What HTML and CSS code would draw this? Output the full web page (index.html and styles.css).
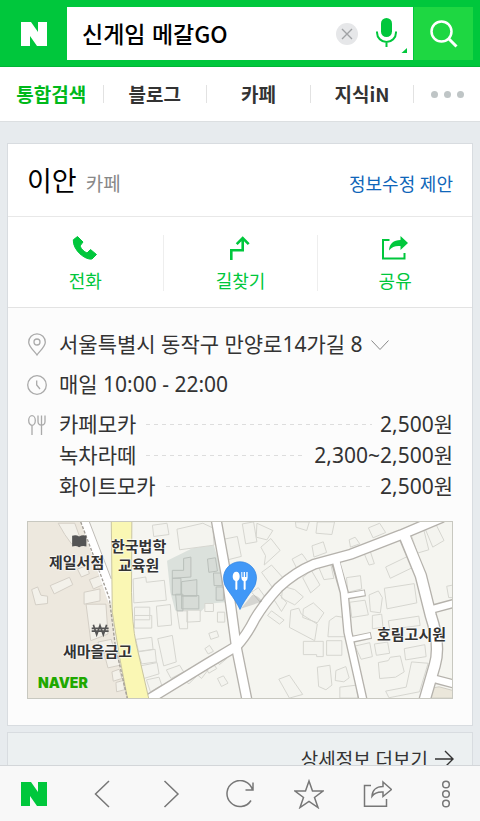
FILE: index.html
```html
<!DOCTYPE html>
<html lang="ko">

<head>
    <meta charset="UTF-8">
    <meta name="viewport" content="width=device-width, initial-scale=1.0">
    <title>NAVER</title>
    <link rel="stylesheet" href="styles.css">
</head>

<body>
    <header class="header">
        <a href="#" class="logo" aria-label="NAVER">
            <svg width="26" height="24" viewBox="0 0 26 24"><path fill="#fff" d="M0 0h10l7 10V0h9v24H16L9 14v10H0z"/></svg>
        </a>
        <form class="search">
            <input type="text" class="query" value="신게임 메갈GO" aria-label="검색어">
            <button type="button" class="clear" aria-label="지우기">
                <svg width="22" height="22" viewBox="0 0 22 22"><circle cx="11" cy="11" r="11" fill="#e6e7e9"/><path d="M6 6l10 10M16 6L6 16" stroke="#a0a2a5" stroke-width="1.4"/></svg>
            </button>
            <button type="button" class="mic" aria-label="음성검색">
                <svg width="32" height="40" viewBox="0 0 32 40"><rect x="6" y="4" width="11" height="19" rx="5.5" fill="#00c73c"/><path d="M2 17.500v1a9.500 9.500 0 0 0 19 0v-1M11.500 28v5" fill="none" stroke="#00c73c" stroke-width="2"/><path d="M32 34v5H26.500z" fill="#00c73c"/></svg>
            </button>
        </form>
        <button type="submit" class="search-button" aria-label="검색">
            <svg width="28" height="28" viewBox="0 0 28 28" fill="none" stroke="#fff"><circle cx="11.500" cy="11.500" r="10" stroke-width="2.500"/><path d="M18.500 18.500l8 8" stroke-width="3"/></svg>
        </button>
    </header>

    <nav class="tabs">
        <a href="#" class="tab active">통합검색</a>
        <a href="#" class="tab">블로그</a>
        <a href="#" class="tab">카페</a>
        <a href="#" class="tab">지식iN</a>
        <button type="button" class="tab-more" aria-label="더보기"><i></i><i></i><i></i></button>
    </nav>

    <main class="content">
        <section class="card">
            <div class="card-title">
                <h1>이안</h1>
                <span class="category">카페</span>
                <a href="#" class="suggest">정보수정 제안</a>
            </div>
            <div class="actions">
                <a href="#" class="action">
                    <svg width="26" height="26" viewBox="0 0 26 26"><path fill="#00c73c" stroke="#00c73c" stroke-linejoin="round" d="M5.500 1.500l5.500 5.500-3 4c1.500 3.500 4 5.500 7 7l3.500-3.500 6 5-4.500 4.500C13.500 25.500.5 15 1.300 4.800z"/></svg>
                    <span>전화</span>
                </a>
                <a href="#" class="action">
                    <svg width="26" height="26" viewBox="0 0 26 26" fill="none" stroke="#00c73c" stroke-width="2.600"><path d="M4.300 25V15.300h11.400V3.500M9.700 9.200l6-6.200 6 6.200"/></svg>
                    <span>길찾기</span>
                </a>
                <a href="#" class="action">
                    <svg width="26" height="26" viewBox="0 0 26 26"><path fill="none" stroke="#00c73c" stroke-width="2" d="M7.500 5H1v18.500h21.500V18"/><path fill="#00c73c" d="M18.500 1L26 8l-7.500 7v-4c-5-.5-8.500.8-11.500 4.500C7.300 9 11.500 5 18.500 5z"/></svg>
                    <span>공유</span>
                </a>
            </div>
            <div class="details">
                <div class="row">
                    <svg class="row-icon" width="20" height="24" viewBox="0 0 20 24" fill="none" stroke="#aaa" stroke-width="1.300"><path d="M10 22C8 18.500 1.700 14 1.700 9.200a8.300 8.300 0 0 1 16.600 0C18.300 14 12 18.500 10 22z"/><circle cx="10" cy="9" r="3"/></svg>
                    <a href="#" class="address">서울특별시 동작구 만양로14가길 8
                        <svg width="18" height="12" viewBox="0 0 18 12" fill="none" stroke="#888"><path d="M.5 1.500l8.500 9 8.500-9"/></svg>
                    </a>
                </div>
                <div class="row">
                    <svg class="row-icon" width="20" height="24" viewBox="0 0 20 24" fill="none" stroke="#aaa" stroke-width="1.300"><circle cx="10" cy="12" r="9.300"/><path d="M9.700 7.500V12l3.300 4"/></svg>
                    <span>매일 10:00 - 22:00</span>
                </div>
                <div class="row">
                    <svg class="row-icon" width="20" height="24" viewBox="0 0 20 24" fill="none" stroke="#aaa" stroke-width="1.300"><ellipse cx="5" cy="7.500" rx="3.300" ry="4.800"/><path d="M5 12.500V22M11 2.500v6q0 3.500 3.500 3.500T18 8.500v-6M14.500 2.500V22"/></svg>
                    <ul class="menu">
                        <li><span>카페모카</span><i></i><span>2,500원</span></li>
                        <li><span>녹차라떼</span><i></i><span>2,300~2,500원</span></li>
                        <li><span>화이트모카</span><i></i><span>2,500원</span></li>
                    </ul>
                </div>
                <div class="map">
                    <svg class="map-base" viewBox="21 18 1278 531" preserveAspectRatio="xMidYMid slice">
                        <rect x="-400" y="18" width="2200" height="531" fill="#f5f5f0"/>
                        <path fill="#ede8de" d="M-400 18H182L268 250 288 400 322 549H-400z"/>
                        <!-- school grounds -->
                        <path fill="#dbe1dc" d="M440 135L515 98 580 85 600 150 615 260 565 265 540 290 465 285 450 230z"/>
                        <!-- buildings -->
                        <g fill="#f3f1ea" stroke="#d4cfc6" stroke-width="3">
                            <path d="M88 210l58-25 10 22-56 28zM32 222l18-8 10 25 20 3v22l-36 4zM112 22h50l18 50-28 12-20-28zM190 230l48-10v36l-48 10zM196 266h60l6 90-52 20zM170 160l28-10 8 24-24 10zM232 380l40-8 8 32-38 12zM252 420l36-6 10 36-36 8zM274 470l22-8 8 28-26 8zM286 502l22-6 4 28-24 6zM206 192l32-12 12 26-32 14z"/>
                        </g>
                        <g fill="#f4f4ef" stroke="#d6d6d0" stroke-width="3">
                            <path d="M338 190l38-6 2 16 54-6 6 60-98 8zM342 275h46v38h-46zM342 300h52v38h-52zM408 272l42-5 4 62-42 4zM346 372l48-6 4 36-44 6zM352 410l52-8 4 38-44 6zM412 370l44-10 12 80-38 12zM360 452l50-10 6 34-46 14zM378 494l38-8 8 24-34 20zM396 28l44-6 6 34-46 6zM470 40l78-18 30 14 4 52-104 14zM470 286h32v54h-24zM500 284h40v34l-40 2zM554 264h26v24h-26zM566 354l24-8 6 18-24 8zM592 490l18-8 14 22-20 10zM592 290h22v30h-22zM438 464l40-14 12 20-38 20zM484 490l22-22 20 18-20 20zM516 464l24-16 24 16-20 26zM550 448l22-12 18 24-24 14zM578 420l20-14 22 24-22 18zM554 400l14-10 12 18-16 8zM612 70l40-8 12 60-40 10z"/>
                        </g>
                        <g fill="#d7dcd7" stroke="#b9c0ba" stroke-width="3">
                            <path d="M456 164h34v-36l22-4v60l-56 4zM456 188h26v50h-26zM484 198l46-6v50h-46zM484 240h52v40h-52zM466 236h22v50h-18zM562 130l24-4 6 40-26 4zM580 172h26v38h-24zM588 214h22v40h-22z"/>
                        </g>
                        <g fill="#f4f4ef" stroke="#d6d6d0" stroke-width="3" transform="translate(645 0)">
                            <path d="M22 24l34-6 10 60-34 6zM66 22l48 22-18 28-32-8zM78 94l30-26 28 36-48 44 4-28zM182 18h42l-8 26-32-10zM248 18h52l-8 38-48-4zM232 90l34-12 10 32-38 14zM172 130l30-16 20 28-30 28zM80 170l30-22 36 40-30 32zM246 140l40-6 12 54-30 4zM204 186l26-22 26 44-28 24zM144 212l36 10 26 22-26 24-40-20zM116 250l16-16 24 28-16 26zM98 300l12-14 38 28-14 12zM50 230l20-14 32 44-14 14zM168 284l24-6 8 18 48 30-8 50-76-40zM206 280l30-18 32 30-20 30-44-16zM284 316l20-14 26 4v58h-50zM206 378h60v46h-20v-6h-40zM276 376h46v44h-46zM344 72l18-8 14 20-28 10zM402 36l34-14 18 28-38 16zM386 106l20-4 14 42-16 4zM336 186l42-6 4 40-42 10zM454 154l66-32 14 34-66 32zM530 54l38-16 16 64-34 10zM572 36l32-14 26 52-34 20zM450 218l90-14 8 58-90 18zM346 260l46-6 10 44-50 8zM404 238l28-12 12 20-6 46-30-4zM414 300l28-4 4 40-32 4zM462 316l92-14 4 28-92 12zM362 392l44-10 8 42-34 8zM420 386l40-6 6 34-40 6zM510 400l62-12 4 36-62 10zM432 442l30-6 6-10 30-4 12 48-26 16-48 4zM454 528l62-12 16-76 50 4-26 86-92 18zM248 456l38-6 6 60-18 14-22-10zM304 466l30-12 10 34-16 12-26-4zM316 516l50-6 4 39h-54zM132 492l32-12 40 58-40 11zM638 212l20-4v38h-14z"/>
                        </g>
                        <path fill="#ebe7db" stroke="#d0cdc3" stroke-width="3" d="M1230 520l30-5 45 12v22h-76z"/>
                        <!-- road outlines -->
                        <g fill="none" stroke="#b5b2ac" stroke-width="34">
                            <path d="M588 10L624 210 649 395 682 560"/>
                            <path d="M380 556L560 446 650 392Q680 360 705 310Q735 260 775 217Q825 170 885 145L995 115 1145 57 1270 4"/>
                            <path stroke-width="28" d="M947 135L974 230 985 350 1032 560"/>
                            <path stroke-width="21" d="M978 242l60-10M990 374l66-14"/>
                            <path stroke-width="38" d="M1153 55L1205 180 1235 300Q1265 390 1247 450L1215 560"/>
                            <path stroke-width="28" d="M1235 282l75-20M1240 490l70 18"/>
                        </g>
                        <!-- roads -->
                        <g fill="none" stroke="#fff" stroke-width="26">
                            <path d="M588 10L624 210 649 395 682 560"/>
                            <path d="M380 556L560 446 650 392Q680 360 705 310Q735 260 775 217Q825 170 885 145L995 115 1145 57 1270 4"/>
                            <path stroke-width="20" d="M947 125L974 230 985 350 1032 560"/>
                            <path stroke-width="14" d="M975 242l60-10M987 374l66-14"/>
                            <path stroke-width="30" d="M1153 52L1205 180 1235 300Q1265 390 1247 450L1215 560"/>
                            <path stroke-width="20" d="M1230 284l80-22M1235 488l75 20"/>
                        </g>
                        <path fill="#fff" d="M180 18h26L274 190v70l-10 2z"/>
                        <path fill="#faf7b4" stroke="#c9c5a0" stroke-width="3" d="M272 12H334L333 230Q335 330 347 385L386 555H322L296 420 275 290z"/>
                        <path fill="none" stroke="#a29d96" stroke-width="4" stroke-dasharray="9 5" d="M180 18L228 145 266 248 284 390 320 549"/>
                        <path fill="none" stroke="#bdbab4" stroke-width="3" d="M206 18L272 190"/>
                        <!-- place symbols -->
                        <path fill="#555" d="M154 60q12-4 21 2 10-6 22-2v32q-12-4-22 2-9-6-21-2z"/>
                        <path fill="none" stroke="#555" stroke-width="5" d="M218 328l10 30 10-28 10 28 10-30M213 339h51M213 347h51"/>
                        <!-- pin -->
                        <path fill="#555" opacity=".2" d="M662 280l65-22q-10-18-30-20z"/>
                        <path fill="#4198f7" stroke="#2f83df" stroke-width="2" d="M660 282Q650 260 625 226Q610 208 610 188a50 50 0 0 1 100 0Q710 208 695 226Q670 260 660 282z"/>
                        <path fill="#fff" d="M649 168c13 0 13 25 3 28v24q-3 6-6 0v-24c-11-3-11-28 3-28zM664 169h3v15h4v-15h4v15h4v-15h4v17q0 8-6 11v23q-3 6-6 0v-23q-7-3-7-11z"/>
                    </svg>
                    <span class="label label-book">제일서점</span>
                    <span class="label label-school">한국법학<br>교육원</span>
                    <span class="label label-bank">새마을금고</span>
                    <span class="label label-house">호림고시원</span>
                    <span class="map-logo">NAVER</span>
                </div>
            </div>
        </section>
        <a href="#" class="more">
            <span>상세정보 더보기</span>
            <svg width="19" height="18" viewBox="0 0 19 18" fill="none" stroke="#333" stroke-width="1.400"><path d="M0 9h18M10 1l8 8-8 8"/></svg>
        </a>
    </main>

    <footer class="toolbar">
        <button type="button" aria-label="홈"><svg width="26" height="24" viewBox="0 0 26 24"><path fill="#00c73c" d="M0 0h10l7 10V0h9v24H16L9 14v10H0z"/></svg></button>
        <button type="button" aria-label="뒤로"><svg width="28" height="28" viewBox="0 0 28 28"><path d="M20 1L6.500 14 20 27"/></svg></button>
        <button type="button" aria-label="앞으로"><svg width="28" height="28" viewBox="0 0 28 28"><path d="M7.500 1L21 14 7.500 27"/></svg></button>
        <button type="button" aria-label="새로고침"><svg width="28" height="28" viewBox="0 0 28 28"><path d="M25 20.500A13 13 0 1 1 26.500 10M27 2.500V10h-7.500"/></svg></button>
        <button type="button" aria-label="즐겨찾기"><svg width="30" height="30" viewBox="0 0 30 30"><path d="M15 2l3.500 10H29l-8.500 6.500L24 28.500l-9-6.200-9 6.200 3.500-10L1 12h10.500z"/></svg></button>
        <button type="button" aria-label="공유"><svg width="30" height="28" viewBox="0 0 30 28"><path d="M9 5.500H2.500v20.800h22V19M21 2l8.500 7.500L21 16.500V12c-5-.3-8.500.8-11 4.300C10.200 10.500 14 6.500 21 6.500z"/></svg></button>
        <button type="button" aria-label="메뉴"><svg width="10" height="28" viewBox="0 0 10 28"><circle cx="5" cy="4.500" r="3.300"/><circle cx="5" cy="14" r="3.300"/><circle cx="5" cy="23.500" r="3.300"/></svg></button>
    </footer>
</body>

</html>
```
FILE: styles.css
```css
* {
    box-sizing: border-box;
}

body {
    display: flex;
    flex-direction: column;
    height: 100vh;
    margin: 0;
    background: #e7ebee;
    color: #333;
    font-family: "Noto Sans", "Noto Sans CJK KR", sans-serif;
    font-size: 18px;
}

a {
    color: inherit;
    text-decoration: none;
}

button {
    padding: 0;
    border: none;
    background: none;
    cursor: pointer;
}

svg {
    display: block;
    flex: none;
}

/* search bar */
.header {
    display: flex;
    flex: none;
    padding: 7px 7px 6px 0;
    background: #00c73c;
    border-bottom: 1px solid #00b536;
}

.logo {
    display: flex;
    align-items: center;
    justify-content: center;
    width: 67px;
}

.search {
    display: flex;
    flex: 1;
    align-items: center;
    min-width: 0;
    height: 53px;
    padding: 0 6px 0 15px;
    background: #fff;
}

.query {
    flex: 1;
    min-width: 0;
    padding: 0 0 2px;
    border: none;
    outline: none;
    background: none;
    color: #000;
    font-family: "Noto Sans CJK KR", sans-serif;
    font-size: 23px;
    font-weight: 500;
}

.mic {
    margin-left: 17px;
}

.search-button {
    display: flex;
    align-items: center;
    justify-content: center;
    width: 59px;
    margin-left: 1px;
    background: #1ed742;
}

/* tabs */
.tabs {
    display: flex;
    flex: none;
    align-items: center;
    height: 55px;
    background: #fff;
    border-bottom: 1px solid #dcdfe1;
}

.tab {
    flex: 103;
    padding-bottom: 1px;
    border-right: 1px solid #e2e2e2;
    font-family: "Noto Sans CJK KR", sans-serif;
    font-size: 19px;
    font-weight: 700;
    line-height: 17px;
    text-align: center;
}

.tab.active {
    color: #00b91a;
}

.tab-more {
    display: flex;
    flex: 66;
    justify-content: center;
    gap: 6px;
}

.tab-more i {
    width: 7px;
    height: 7px;
    border-radius: 50%;
    background: #bfc5c6;
}

/* place card */
.content {
    flex: 1;
    min-height: 0;
    padding: 21px 7px 0;
    overflow: hidden;
}

.card {
    background: #fff;
    border: 1px solid #d8dce0;
}

.card-title {
    display: flex;
    align-items: baseline;
    height: 73px;
    padding: 17px 19px 0;
    border-bottom: 1px solid #e8e8e8;
}

.card-title h1 {
    margin: 0 9px 0 0;
    color: #000;
    font-size: 27px;
    font-weight: 400;
    line-height: 40px;
}

.category {
    color: #888;
    font-size: 19px;
}

.suggest {
    margin-left: auto;
    color: #0f66b9;
}

.actions {
    display: grid;
    grid-template-columns: repeat(3, 1fr);
    padding: 18px 0 16px;
    border-bottom: 1px solid #e3e3e3;
}

.action {
    display: flex;
    flex-direction: column;
    align-items: center;
    gap: 6px;
    height: 56px;
    color: #00c73c;
    line-height: 28px;
}

.action + .action {
    border-left: 1px solid #eee;
}

.details {
    padding: 21px 19px 26px;
    background: #fcfcfc;
    font-size: 21px;
    line-height: 31px;
}

.row {
    display: flex;
    gap: 12px;
    margin-bottom: 9px;
}

.row-icon {
    margin-top: 4px;
}

.address {
    display: flex;
    align-items: center;
    gap: 8px;
}

.menu {
    flex: 1;
    margin: 0;
    padding: 0;
    list-style: none;
}

.menu li {
    display: flex;
    align-items: center;
}

.menu i {
    flex: 1;
    height: 1px;
    margin: 0 8px 0 10px;
    background: repeating-linear-gradient(to right, #ddd 0 4px, transparent 4px 8px);
}

/* map */
.map {
    position: relative;
    height: 178px;
    margin-top: 19px;
    border: 1px solid #c8c8c0;
    overflow: hidden;
}

.map-base {
    width: 100%;
    height: 100%;
}

.label,
.map-logo {
    position: absolute;
}

.label {
    color: #333;
    font-family: "Noto Sans CJK KR", sans-serif;
    font-size: 15px;
    font-weight: 700;
    line-height: 19px;
    text-align: center;
    white-space: nowrap;
    text-shadow: 0 0 2px #fff, 0 0 2px #fff, 0 0 2px #fff;
}

.label-book {
    left: 21px;
    top: 30px;
}

.label-school {
    left: 83px;
    top: 14px;
}

.label-bank {
    left: 35px;
    top: 119px;
}

.label-house {
    right: 6px;
    top: 102px;
}

.map-logo {
    left: 10px;
    bottom: 6px;
    color: #1fa800;
    font-family: Inter, sans-serif;
    font-size: 14px;
    font-weight: 900;
    line-height: 18px;
}

.more {
    display: flex;
    align-items: center;
    justify-content: flex-end;
    gap: 7px;
    height: 54px;
    margin-top: 6px;
    padding: 0 18px;
    background: #ecf0f1;
    border: 1px solid #d8dce0;
    font-size: 19px;
}

/* browser toolbar */
.toolbar {
    display: grid;
    flex: none;
    grid-template-columns: repeat(7, 1fr);
    height: 56px;
    background: #f8f8f8;
    border-top: 1px solid #d3d6d9;
}

.toolbar button {
    display: flex;
    align-items: center;
    justify-content: center;
    fill: none;
    stroke: #777;
    stroke-width: 1.5px;
}

.toolbar button:first-child {
    stroke: none;
}
```
